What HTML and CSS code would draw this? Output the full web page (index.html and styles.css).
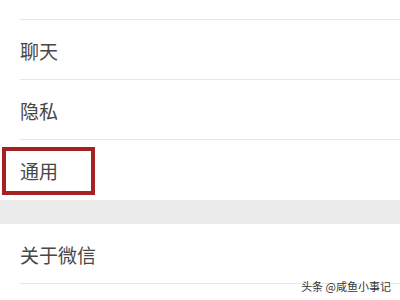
FILE: index.html
```html
<!DOCTYPE html>
<html lang="zh">
<head>
<meta charset="utf-8">
<link rel="stylesheet" href="styles.css">
</head>
<body>
<div class="page">
  <div class="group">
    <div class="cell cell-partial"><div class="cell-inner"></div></div>
    <div class="cell"><div class="cell-inner">聊天</div></div>
    <div class="cell"><div class="cell-inner">隐私</div></div>
    <div class="cell cell-last"><div class="cell-inner">通用</div></div>
  </div>
  <div class="gap"></div>
  <div class="group">
    <div class="cell"><div class="cell-inner">关于微信</div></div>
  </div>
  <div class="highlight"></div>
  <div class="watermark">头条 @咸鱼小事记</div>
</div>
</body>
</html>
```
FILE: styles.css
```css
html, body {
  margin: 0;
  padding: 0;
  background: #ffffff;
}
.page {
  position: relative;
  width: 400px;
  height: 300px;
  overflow: hidden;
  font-family: "Noto Sans CJK SC", "Noto Sans", sans-serif;
  color: #474747;
}
.group {
  background: #ffffff;
}
.cell {
  padding-left: 20px;
}
.cell-inner {
  box-sizing: border-box;
  height: 60px;
  border-bottom: 1px solid #e8e8e8;
  display: flex;
  align-items: center;
  font-size: 19px;
  line-height: 1;
  padding-top: 1px;
}
.cell-partial .cell-inner {
  height: 20px;
  padding-top: 0;
}
.cell-last .cell-inner {
  height: 60px;
  border-bottom: none;
}
.gap {
  height: 24px;
  background: #ebebeb;
}
.highlight {
  position: absolute;
  left: 2px;
  top: 147px;
  width: 85px;
  height: 40px;
  border: 4px solid #a52222;
}
.watermark {
  position: absolute;
  right: 9px;
  top: 279px;
  font-size: 11px;
  line-height: 14px;
  color: #333333;
  text-shadow: 0 0 2px #ffffff, 0 0 2px #ffffff;
}
```
